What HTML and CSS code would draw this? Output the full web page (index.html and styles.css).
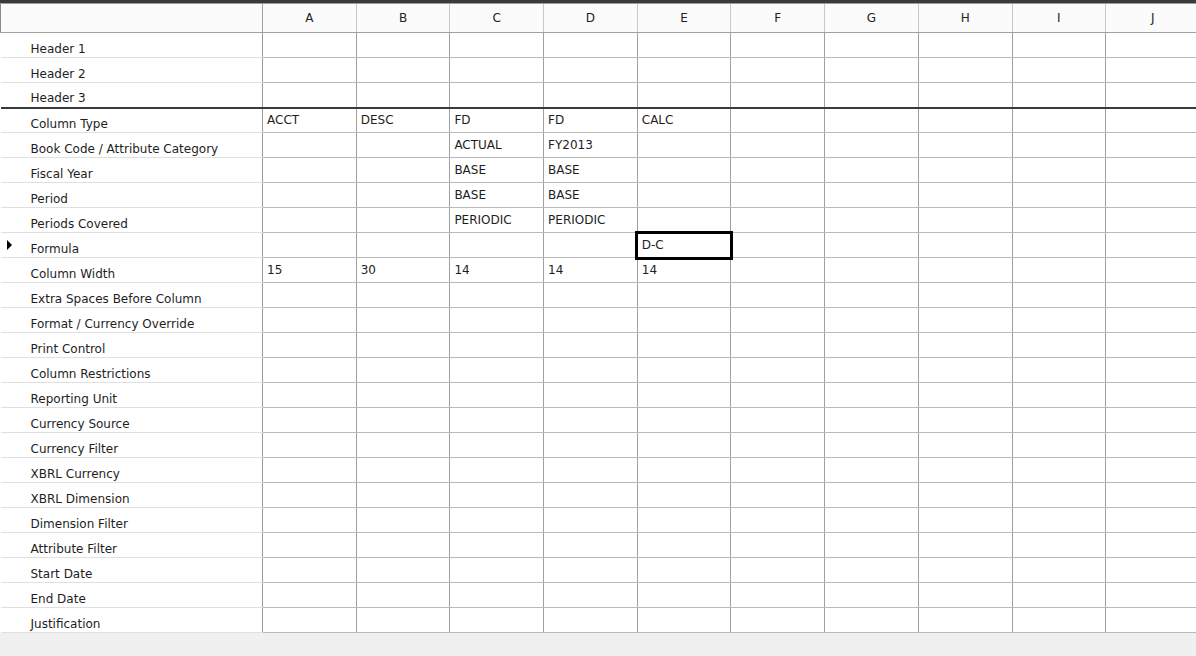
FILE: index.html
```html
<!DOCTYPE html>
<html>
<head>
<meta charset="utf-8">
<link rel="stylesheet" href="styles.css">
</head>
<body>
<div class="sheet">
<table class="grid">
<colgroup>
<col class="c-label">
<col class="c-col"><col class="c-col"><col class="c-col"><col class="c-col"><col class="c-col">
<col class="c-col"><col class="c-col"><col class="c-col"><col class="c-col"><col class="c-col">
</colgroup>
<thead>
<tr class="colhead">
<th class="corner"></th>
<th>A</th><th>B</th><th>C</th><th>D</th><th>E</th><th>F</th><th>G</th><th>H</th><th>I</th><th>J</th>
</tr>
</thead>
<tbody>
<tr><th class="label">Header 1</th><td></td><td></td><td></td><td></td><td></td><td></td><td></td><td></td><td></td><td></td></tr>
<tr><th class="label">Header 2</th><td></td><td></td><td></td><td></td><td></td><td></td><td></td><td></td><td></td><td></td></tr>
<tr class="sep"><th class="label">Header 3</th><td></td><td></td><td></td><td></td><td></td><td></td><td></td><td></td><td></td><td></td></tr>
<tr><th class="label">Column Type</th><td>ACCT</td><td>DESC</td><td>FD</td><td>FD</td><td>CALC</td><td></td><td></td><td></td><td></td><td></td></tr>
<tr><th class="label">Book Code / Attribute Category</th><td></td><td></td><td>ACTUAL</td><td>FY2013</td><td></td><td></td><td></td><td></td><td></td><td></td></tr>
<tr><th class="label">Fiscal Year</th><td></td><td></td><td>BASE</td><td>BASE</td><td></td><td></td><td></td><td></td><td></td><td></td></tr>
<tr><th class="label">Period</th><td></td><td></td><td>BASE</td><td>BASE</td><td></td><td></td><td></td><td></td><td></td><td></td></tr>
<tr><th class="label">Periods Covered</th><td></td><td></td><td>PERIODIC</td><td>PERIODIC</td><td></td><td></td><td></td><td></td><td></td><td></td></tr>
<tr class="current"><th class="label"><span class="marker"></span>Formula</th><td></td><td></td><td></td><td></td><td class="selected">D-C</td><td></td><td></td><td></td><td></td><td></td></tr>
<tr><th class="label">Column Width</th><td>15</td><td>30</td><td>14</td><td>14</td><td>14</td><td></td><td></td><td></td><td></td><td></td></tr>
<tr><th class="label">Extra Spaces Before Column</th><td></td><td></td><td></td><td></td><td></td><td></td><td></td><td></td><td></td><td></td></tr>
<tr><th class="label">Format / Currency Override</th><td></td><td></td><td></td><td></td><td></td><td></td><td></td><td></td><td></td><td></td></tr>
<tr><th class="label">Print Control</th><td></td><td></td><td></td><td></td><td></td><td></td><td></td><td></td><td></td><td></td></tr>
<tr><th class="label">Column Restrictions</th><td></td><td></td><td></td><td></td><td></td><td></td><td></td><td></td><td></td><td></td></tr>
<tr><th class="label">Reporting Unit</th><td></td><td></td><td></td><td></td><td></td><td></td><td></td><td></td><td></td><td></td></tr>
<tr><th class="label">Currency Source</th><td></td><td></td><td></td><td></td><td></td><td></td><td></td><td></td><td></td><td></td></tr>
<tr><th class="label">Currency Filter</th><td></td><td></td><td></td><td></td><td></td><td></td><td></td><td></td><td></td><td></td></tr>
<tr><th class="label">XBRL Currency</th><td></td><td></td><td></td><td></td><td></td><td></td><td></td><td></td><td></td><td></td></tr>
<tr><th class="label">XBRL Dimension</th><td></td><td></td><td></td><td></td><td></td><td></td><td></td><td></td><td></td><td></td></tr>
<tr><th class="label">Dimension Filter</th><td></td><td></td><td></td><td></td><td></td><td></td><td></td><td></td><td></td><td></td></tr>
<tr><th class="label">Attribute Filter</th><td></td><td></td><td></td><td></td><td></td><td></td><td></td><td></td><td></td><td></td></tr>
<tr><th class="label">Start Date</th><td></td><td></td><td></td><td></td><td></td><td></td><td></td><td></td><td></td><td></td></tr>
<tr><th class="label">End Date</th><td></td><td></td><td></td><td></td><td></td><td></td><td></td><td></td><td></td><td></td></tr>
<tr><th class="label">Justification</th><td></td><td></td><td></td><td></td><td></td><td></td><td></td><td></td><td></td><td></td></tr>
</tbody>
</table>
</div>
</body>
</html>
```
FILE: styles.css
```css
html, body {
  margin: 0;
  padding: 0;
}
body {
  width: 1196px;
  height: 656px;
  overflow: hidden;
  background: #f0f0f0;
  font-family: "DejaVu Sans", "Liberation Sans", sans-serif;
  font-size: 12px;
  color: #1e1e1e;
}
.sheet {
  width: 1196px;
  overflow: hidden;
  border-top: 3px solid #3a3a3a;
  background: #ffffff;
}
.grid {
  border-collapse: collapse;
  table-layout: fixed;
  width: 1199px;
}
.c-label { width: 262px; }
.c-col { width: 93.7px; }

.colhead th {
  height: 28px;
  padding: 0;
  font-weight: normal;
  text-align: center;
  vertical-align: middle;
  background: #fbfbfb;
  border-top: 1px solid #9a9a9a;
  border-bottom: 1px solid #a0a0a0;
  border-left: 1px solid #c8c8c8;
  color: #222;
}
.colhead th.corner {
  border-left: 1px solid #8a8a8a;
  border-right: 1px solid #a0a0a0;
}
tbody tr {
  height: 25px;
}
tbody th.label {
  position: relative;
  height: 25px;
  padding: 7px 0 0 30px;
  box-sizing: border-box;
  font-weight: normal;
  text-align: left;
  vertical-align: middle;
  white-space: nowrap;
  background: #ffffff;
  border-bottom: 1px solid #e0e0e0;
  border-right: 1px solid #999999;
}
tbody td {
  height: 25px;
  padding: 0 0 0 4px;
  box-sizing: border-box;
  vertical-align: middle;
  white-space: nowrap;
  overflow: hidden;
  border-left: 1px solid #a0a0a0;
  border-bottom: 1px solid #bababa;
  background: #ffffff;
}
tbody tr.sep th.label,
tbody tr.sep td {
  border-bottom: 2px solid #3a3a3a;
}
tbody td.selected {
  outline: 3px solid #000000;
  outline-offset: -1px;
  padding-left: 4px;
}
.marker {
  position: absolute;
  left: 6px;
  top: 7px;
  width: 0;
  height: 0;
  border-top: 5px solid transparent;
  border-bottom: 5px solid transparent;
  border-left: 5px solid #000;
}
```
